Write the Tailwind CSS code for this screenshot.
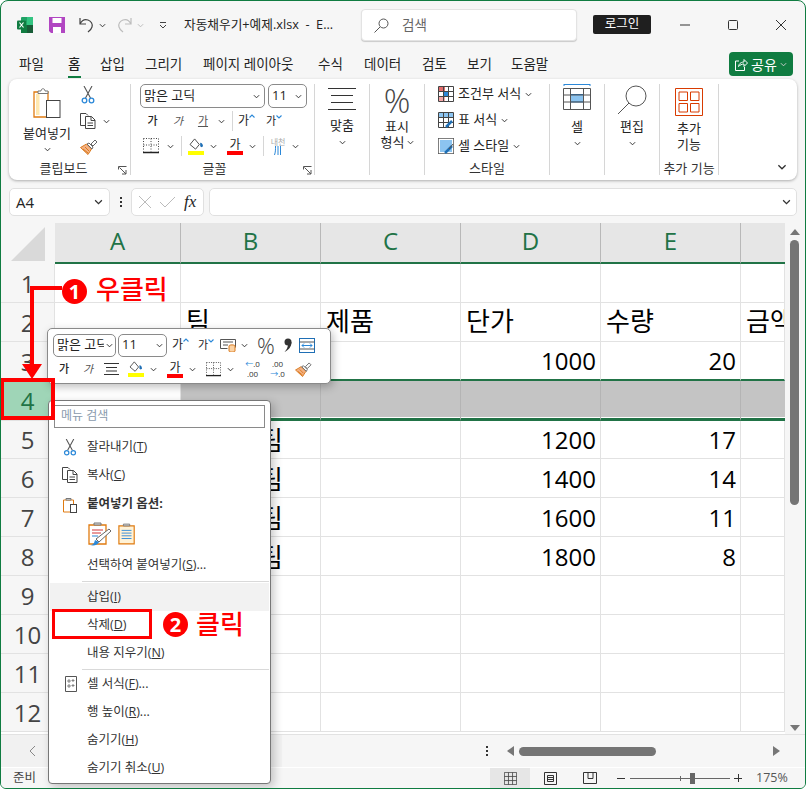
<!doctype html>
<html lang="ko">
<head>
<meta charset="utf-8">
<script src="https://cdn.jsdelivr.net/npm/@tailwindcss/browser@4"></script>
<title>자동채우기+예제.xlsx</title>
</head>
<body class="bg-white">
<svg width="0" height="0" class="absolute">
  <symbol id="chev" viewBox="0 0 8 5"><path d="M1 1l3 3 3-3" fill="none" stroke="#333" stroke-width="1.1"/></symbol>
  <symbol id="up" viewBox="0 0 6 4"><path d="M.5 3.500L3 1l2.500 2.500" fill="none" stroke="#2b88d8" stroke-width="1.100"/></symbol>
  <symbol id="down" viewBox="0 0 6 4"><path d="M.5.500L3 3 5.500.500" fill="none" stroke="#2b88d8" stroke-width="1.100"/></symbol>
  <symbol id="launch" viewBox="0 0 9 9"><path d="M.5 3.5v-3h8M1.500 1.500l6.500 6.500M8 4v4H4" fill="none" stroke="#555"/></symbol>
  <symbol id="scissors" viewBox="0 0 14 18"><path d="M3 0l6.500 12M11 0L4.500 12" fill="none" stroke="#555" stroke-width="1.100"/><circle cx="3.500" cy="14.500" r="2.300" fill="none" stroke="#2b88d8" stroke-width="1.300"/><circle cx="10.500" cy="14.500" r="2.300" fill="none" stroke="#2b88d8" stroke-width="1.300"/></symbol>
  <symbol id="copy" viewBox="0 0 17 16"><path d="M5 12.500H.5v-12H6l2 2M5.500 3.500h6l3.500 3.500v8.500H5.500zM11 3.500v4h4M7.500 10h5.500M7.500 12.500h5.500" fill="none" stroke="#444"/></symbol>
  <symbol id="brush" viewBox="0 0 18 16"><path d="M0.500 8.500l6-3.500 5 5-3.500 5.500z" fill="#f4b183" stroke="#d97a1e"/><path d="M3 10l5 4M5 8l4 4" stroke="#d97a1e"/><path d="M7 5l2-1 4 4-1 2zM11 5l4-4 2 2-4 4z" fill="#fff" stroke="#666"/></symbol>
  <symbol id="border" viewBox="0 0 16 16"><path d="M.5.500h15M.5.500v13M15.500.500v13M8 .5v13M.5 7h15" fill="none" stroke="#444" stroke-dasharray="1 1.500"/><path d="M0 14.500h16" stroke="#222" stroke-width="1.400"/></symbol>
  <symbol id="bucket" viewBox="0 0 16 14"><path d="M1 7l5-6 5 6-4 5z" fill="#fff" stroke="#444"/><path d="M12 5c2 0 3 2 3 4l-1.500 1L12 9z" fill="#1f6fb5"/></symbol>
  <symbol id="alignlines" viewBox="0 0 28 22"><path d="M0 .5h28M3 7.500h22M3 14.500h22M0 21.500h28" stroke="#333" stroke-width="1"/></symbol>
  <symbol id="stylegrid" viewBox="0 0 16 16"><path d="M.5.500h15v15H.5zM.5 5.500h15M.5 10.500h15M5.500.500v15M10.500.500v15" fill="none" stroke="#444"/></symbol>
</svg>

<div class="relative flex h-[789px] w-[806px] flex-col overflow-hidden rounded-t-[8px] rounded-b-[6px] border border-[#107c41] bg-[#f6f6f6] font-['Open_Sans','Noto_Sans_CJK_KR',sans-serif] text-[#242424]">

  <!-- Title bar -->
  <header class="flex h-[46px] items-center pt-[2px] text-[12px]">
    <svg class="ml-[16px] h-[16px] w-[16px]" viewBox="0 0 16 16"><rect x="4" width="12" height="16" rx="1" fill="#21a366"/><rect x="10" width="6" height="8" fill="#33c481"/><rect x="4" y="8" width="6" height="8" fill="#107c41"/><rect x="10" y="8" width="6" height="8" fill="#185c37"/><rect y="3.500" width="9" height="9" rx="1" fill="#107c41"/><path d="M2.500 5.500l4 5M6.500 5.500l-4 5" stroke="#fff" stroke-width="1.200"/></svg>
    <svg class="ml-[16px] h-[16px] w-[16px]" viewBox="0 0 16 16"><path d="M0 0h16v16H2l-2-2z" fill="#b146c2"/><rect x="3.500" y="1" width="9" height="5" fill="#fff"/><rect x="4" y="10" width="8" height="6" fill="#fff"/></svg>
    <svg class="ml-[14px] h-[16px] w-[15px]" viewBox="0 0 15 16"><path d="M1 1v6h6M1 7c2-4 5-5 8-4s5 4 4 7-3 4-4 5" fill="none" stroke="#444" stroke-width="1.200"/></svg>
    <svg class="ml-[5px] h-[5px] w-[7px]"><use href="#chev"/></svg>
    <svg class="ml-[11px] h-[16px] w-[15px]" viewBox="0 0 15 16"><path d="M14 1v6H8M14 7c-2-4-5-5-8-4S1 7 2 10s3 4 4 5" fill="none" stroke="#bdbdbd" stroke-width="1.200"/></svg>
    <svg class="ml-[5px] h-[5px] w-[7px] opacity-30"><use href="#chev"/></svg>
    <svg class="ml-[15px] h-[7px] w-[8px]" viewBox="0 0 8 7"><path d="M1 .5h6M1 3l3 3 3-3" fill="none" stroke="#444"/></svg>
    <span class="ml-[17px] w-[165px] whitespace-pre text-[12.7px]">자동채우기+예제.xlsx  -  E...</span>
    <div class="ml-[12px] flex h-[32px] w-[216px] items-center rounded-[4px] border border-[#e3e3e3] bg-white pl-[12px] shadow-[0_1px_1px_rgba(0,0,0,.18)]">
      <svg class="h-[15px] w-[15px]" viewBox="0 0 15 15"><circle cx="9.500" cy="5.500" r="4.500" fill="none" stroke="#555"/><path d="M6 9l-5.500 5.500" stroke="#555"/></svg>
      <span class="ml-[13px] text-[13.500px] text-[#666]">검색</span>
    </div>
    <div class="ml-[16px] mt-[-1px] flex h-[19px] w-[58px] items-center justify-center rounded-[2px] bg-[#1f1f1f] text-[12.500px] text-white">로그인</div>
    <svg class="ml-[29px] h-[10px] w-[10px]" viewBox="0 0 10 10"><path d="M0 5h10" stroke="#333"/></svg>
    <svg class="ml-[38px] h-[10px] w-[10px]" viewBox="0 0 10 10"><rect x=".5" y=".5" width="9" height="9" rx="1" fill="none" stroke="#333"/></svg>
    <svg class="ml-[38px] h-[10px] w-[10px]" viewBox="0 0 10 10"><path d="M0 0l10 10M10 0L0 10" stroke="#333"/></svg>
  </header>

  <!-- Tabs -->
  <nav class="flex h-[32px] items-center pl-[18px] pt-[2px] text-[13.500px]">
    <span class="w-[25px] whitespace-nowrap">파일</span>
    <span class="relative ml-[24px] w-[13px] font-medium">홈<span class="absolute -bottom-[4px] left-0 h-[2px] w-[13px] bg-[#107c41]"></span></span>
    <span class="ml-[19px] w-[25px] whitespace-nowrap">삽입</span>
    <span class="ml-[20px] w-[38px] whitespace-nowrap">그리기</span>
    <span class="ml-[20px] w-[95px] whitespace-nowrap">페이지 레이아웃</span>
    <span class="ml-[20px] w-[25px] whitespace-nowrap">수식</span>
    <span class="ml-[21px] w-[38px] whitespace-nowrap">데이터</span>
    <span class="ml-[20px] w-[25px] whitespace-nowrap">검토</span>
    <span class="ml-[20px] w-[25px] whitespace-nowrap">보기</span>
    <span class="ml-[19px] w-[38px] whitespace-nowrap">도움말</span>
    <div class="ml-[180px] flex h-[24px] w-[64px] items-center justify-center gap-[3px] rounded-[4px] bg-[#107c41] text-[14px] text-white">
      <svg class="h-[13px] w-[13px]" viewBox="0 0 13 13"><path d="M4 3H.5v9.500h9V9M3.500 8.500C4 5 7 4 9 4V1.500L12.500 5 9 8.500V6C7 6 5 7 3.500 8.500z" fill="none" stroke="#fff"/></svg>
      <span>공유</span>
      <svg class="h-[5px] w-[7px] invert"><use href="#chev"/></svg>
    </div>
  </nav>

  <!-- Ribbon -->
  <section class="mx-[8px] flex h-[101px] rounded-[8px] bg-white py-[5px] text-[13px] shadow-[0_1px_3px_rgba(0,0,0,.3)]">

    <div class="flex w-[122px] flex-col border-r border-[#d6d6d6]">
      <div class="flex h-[78px]">
        <div class="flex w-[76px] flex-col items-center pt-[4px]">
          <svg class="h-[30px] w-[28px]" viewBox="0 0 28 30"><path d="M1 4h14v25H1z" fill="#fff" stroke="#e07b10" stroke-width="1.300"/><path d="M3 6v21h3.500V6z" fill="#ffe8b0"/><path d="M5 5.500V3h3c0-3 4-3 4 0h3v2.500z" fill="#fff" stroke="#777"/><rect x="13.500" y="12.500" width="13.500" height="17" fill="#fff" stroke="#444"/></svg>
          <span class="mt-[6px] whitespace-nowrap">붙여넣기</span>
          <svg class="mt-[3px] h-[5px] w-[7px]"><use href="#chev"/></svg>
        </div>
        <div class="flex flex-col gap-[10px] pt-[3px]">
          <div class="flex h-[16px] w-[14px]"><svg class="-mt-[1px] ml-[-4px] h-[18px] w-[14px]"><use href="#scissors"/></svg></div>
          <div class="flex h-[16px] items-center"><svg class="ml-[-5px] h-[16px] w-[17px]"><use href="#copy"/></svg><svg class="ml-[6px] h-[5px] w-[7px]"><use href="#chev"/></svg></div>
          <div class="flex h-[16px]"><svg class="ml-[-5px] h-[16px] w-[18px]"><use href="#brush"/></svg></div>
        </div>
      </div>
      <div class="relative flex h-[13px] items-center justify-center pr-[12px] text-[#333]">클립보드<svg class="absolute right-[3px] top-[4px] h-[9px] w-[9px]"><use href="#launch"/></svg></div>
    </div>

    <div class="flex w-[184px] flex-col border-r border-[#d6d6d6]">
      <div class="h-[78px] pl-[9px]">
        <div class="flex h-[24px] gap-[3px]">
          <div class="flex w-[125px] items-center justify-between rounded-[5px] border border-[#8a8a8a] px-[3px] pr-[4px]"><span>맑은 고딕</span><svg class="h-[5px] w-[7px]"><use href="#chev"/></svg></div>
          <div class="flex w-[39px] items-center justify-between rounded-[5px] border border-[#8a8a8a] px-[3px] pr-[4px]"><span>11</span><svg class="h-[5px] w-[7px]"><use href="#chev"/></svg></div>
        </div>
        <div class="mt-[3px] flex h-[20px] items-center">
          <span class="w-[25px] text-center text-[11px] font-medium">가</span>
          <span class="w-[26px] text-center text-[11px] italic text-[#555]">가</span>
          <span class="w-[24px] text-center text-[11px] text-[#555] underline">가</span>
          <svg class="ml-[3px] h-[5px] w-[7px]"><use href="#chev"/></svg>
          <span class="ml-[7px] h-[20px] w-px bg-[#d6d6d6]"></span>
          <span class="ml-[5px] flex w-[20px] items-start text-[12px]">가<svg class="mt-[2px] h-[4px] w-[6px]"><use href="#up"/></svg></span>
          <span class="ml-[8px] flex w-[20px] items-start text-[11px]">가<svg class="mt-[2px] h-[4px] w-[6px]"><use href="#down"/></svg></span>
        </div>
        <div class="mt-[5px] flex h-[20px] items-center">
          <svg class="ml-[3px] h-[16px] w-[16px]"><use href="#border"/></svg>
          <svg class="ml-[8px] h-[5px] w-[7px]"><use href="#chev"/></svg>
          <span class="ml-[7px] h-[20px] w-px bg-[#d6d6d6]"></span>
          <div class="ml-[6px] flex w-[16px] flex-col items-center"><svg class="h-[13px] w-[15px]"><use href="#bucket"/></svg><span class="h-[4px] w-[16px] bg-[#ffff00]"></span></div>
          <svg class="ml-[6px] h-[5px] w-[7px]"><use href="#chev"/></svg>
          <div class="ml-[10px] flex w-[16px] flex-col items-center text-[12px] leading-[13px]">가<span class="h-[4px] w-[16px] bg-[#ff0000]"></span></div>
          <svg class="ml-[6px] h-[5px] w-[7px]"><use href="#chev"/></svg>
          <span class="ml-[7px] h-[20px] w-px bg-[#d6d6d6]"></span>
          <div class="ml-[6px] flex w-[16px] flex-col items-center text-[8px] leading-[9px] text-[#aaa]"><span class="whitespace-nowrap">내천</span><svg class="h-[9px] w-[8px]" viewBox="0 0 8 9"><path d="M1.500 0c0 4 0 6-1 9M4 0v9M6.500 0v9" fill="none" stroke="#2b88d8"/></svg></div>
          <svg class="ml-[6px] h-[5px] w-[7px]"><use href="#chev"/></svg>
        </div>
      </div>
      <div class="relative flex h-[13px] items-center justify-center pr-[16px] text-[#333]">글꼴<svg class="absolute right-[2px] top-[4px] h-[9px] w-[9px]"><use href="#launch"/></svg></div>
    </div>

    <div class="flex w-[55px] flex-col items-center border-r border-[#d6d6d6] pt-[4px]">
      <svg class="h-[22px] w-[28px]"><use href="#alignlines"/></svg>
      <span class="mt-[6px] whitespace-nowrap">맞춤</span>
      <svg class="mt-[4px] h-[5px] w-[7px]"><use href="#chev"/></svg>
    </div>

    <div class="flex w-[55px] flex-col items-center border-r border-[#d6d6d6]">
      <span class="h-[33px] text-[33px] font-light leading-[33px] text-[#444]">%</span>
      <span class="mt-px whitespace-nowrap leading-[16px]">표시</span>
      <div class="flex items-center gap-[3px] pl-[1px] leading-[16px]"><span class="whitespace-nowrap">형식</span><svg class="h-[5px] w-[7px]"><use href="#chev"/></svg></div>
    </div>

    <div class="flex w-[125px] flex-col border-r border-[#d6d6d6]">
      <div class="flex h-[78px] flex-col gap-[10px] pl-[13px] pt-[2px]">
        <div class="flex h-[16px] items-center gap-[4px] whitespace-nowrap"><svg class="h-[16px] w-[16px]" viewBox="0 0 16 16"><rect x="1" y="1" width="6" height="4" fill="#e46c6c"/><rect x="5" y="6" width="6" height="4" fill="#2b88d8"/><rect x="1" y="11" width="6" height="4" fill="#f4a6a6"/><use href="#stylegrid"/></svg><span>조건부 서식</span><svg class="h-[5px] w-[7px]"><use href="#chev"/></svg></div>
        <div class="flex h-[16px] items-center gap-[4px] whitespace-nowrap"><svg class="h-[16px] w-[16px]" viewBox="0 0 16 16"><rect x="1" y="1" width="14" height="4" fill="#8cc4f0"/><use href="#stylegrid"/><path d="M8 15l6-6" stroke="#1f6fb5" stroke-width="2.500"/></svg><span>표 서식</span><svg class="h-[5px] w-[7px]"><use href="#chev"/></svg></div>
        <div class="flex h-[16px] items-center gap-[4px] whitespace-nowrap"><svg class="h-[16px] w-[16px]" viewBox="0 0 16 16"><rect width="16" height="16" fill="none" stroke="#555" stroke-width="1.500"/><rect x="2" y="2" width="12" height="12" fill="#8cc4f0"/><path d="M7 15l7-7" stroke="#1f6fb5" stroke-width="2.500"/><path d="M11 11l4-5" stroke="#555"/></svg><span>셀 스타일</span><svg class="h-[5px] w-[7px]"><use href="#chev"/></svg></div>
      </div>
      <div class="flex h-[13px] items-center justify-center text-[#333]">스타일</div>
    </div>

    <div class="flex w-[55px] flex-col items-center border-r border-[#d6d6d6]">
      <svg class="h-[28px] w-[28px]" viewBox="0 0 28 28"><path d="M1 .5h26M1 0v2M27 0v2" stroke="#2b88d8"/><rect x="7.500" y="10.500" width="13" height="7.500" fill="#8cc4f0" stroke="#1f6fb5"/><path d="M.5 4.500h27v21H.5zM.5 11h27M.5 18h27M7.500 4.500v21M20.500 4.500v21" fill="none" stroke="#555"/></svg>
      <span class="mt-[5px]">셀</span>
      <svg class="mt-[4px] h-[5px] w-[7px]"><use href="#chev"/></svg>
    </div>

    <div class="flex w-[55px] flex-col items-center border-r border-[#d6d6d6]">
      <svg class="mt-[1px] h-[30px] w-[30px]" viewBox="0 0 30 30"><circle cx="19" cy="11" r="10" fill="none" stroke="#555"/><path d="M12 18L1 29" stroke="#555"/></svg>
      <span class="mt-[2px] whitespace-nowrap">편집</span>
      <svg class="mt-[4px] h-[5px] w-[7px]"><use href="#chev"/></svg>
    </div>

    <div class="flex w-[59px] flex-col items-center border-r border-[#d6d6d6]">
      <svg class="mt-[4px] h-[28px] w-[28px]" viewBox="0 0 28 28"><path d="M.5.500h27v27H.5z" fill="none" stroke="#d83b01"/><path d="M4 4h8.500v8.500H4zM15.500 4H24v8.500h-8.500zM4 15.500h8.500V24H4zM15.500 15.500H24V24h-8.500z" fill="none" stroke="#d83b01"/></svg>
      <span class="mt-[4px] whitespace-nowrap leading-[16px]">추가</span>
      <span class="whitespace-nowrap leading-[16px]">기능</span>
      <span class="mt-[10px] h-[13px] whitespace-nowrap leading-[13px] text-[#333]">추가 기능</span>
    </div>

    <div class="flex flex-1 items-end justify-end pb-[5px] pr-[10px]"><svg class="h-[6px] w-[10px]"><use href="#chev"/></svg></div>
  </section>

  <!-- Formula bar -->
  <div class="mx-[8px] mt-[8px] flex h-[28px] text-[15px]">
    <div class="flex w-[101px] items-center justify-between rounded-[5px] border border-[#e0e0e0] bg-white pl-[6px] pr-[6px]"><span>A4</span><svg class="h-[6px] w-[9px]"><use href="#chev"/></svg></div>
    <div class="flex w-[21px] flex-col items-center justify-center gap-[2px]"><i class="h-[2px] w-[2px] bg-[#333]"></i><i class="h-[2px] w-[2px] bg-[#333]"></i><i class="h-[2px] w-[2px] bg-[#333]"></i></div>
    <div class="flex w-[73px] items-center justify-around rounded-[5px] border border-[#e0e0e0] bg-white px-[2px]">
      <svg class="h-[12px] w-[12px]" viewBox="0 0 12 12"><path d="M0 0l12 12M12 0L0 12" stroke="#bbb"/></svg>
      <svg class="h-[12px] w-[15px]" viewBox="0 0 15 12"><path d="M0 6l5 5L15 1" fill="none" stroke="#bbb"/></svg>
      <span class="font-['Liberation_Serif',serif] text-[17px] italic">fx</span>
    </div>
    <div class="ml-[5px] flex flex-1 items-center justify-end rounded-[5px] border border-[#e0e0e0] bg-white pr-[5px]"><svg class="h-[6px] w-[9px]"><use href="#chev"/></svg></div>
  </div>

  <!-- Sheet -->
  <div class="mt-[7px] flex h-[511px]">
    <div class="h-[511px] w-[784px] overflow-hidden">
      <div class="grid grid-cols-[54px_126px_140px_140px_140px_140px_44px] grid-rows-[41px_39px_39px_39px_40px_38px_repeat(7,39px)] bg-white text-[24px] leading-none text-black [&>div]:flex [&>div]:items-center [&>div]:overflow-hidden [&>div]:whitespace-nowrap [&>div]:border-r [&>div]:border-b [&>div]:border-[#e2e2e2] [&>div]:pt-px">
        <!-- headers -->
        <div class="justify-center !border-r-0 !border-b-0 bg-[#f6f6f6]"><svg class="ml-[-1px] h-[34px] w-[34px]" viewBox="0 0 34 34"><path d="M34 0v34H0z" fill="#d9d9d9"/></svg></div>
        <div class="justify-center !border-b-2 !border-r-[#b8b8b8] !border-b-[#217346] bg-[#e6e6e6] !pt-0 pb-[4px] text-[#217346]">A</div>
        <div class="justify-center !border-b-2 !border-r-[#b8b8b8] !border-b-[#217346] bg-[#e6e6e6] !pt-0 pb-[4px] text-[#217346]">B</div>
        <div class="justify-center !border-b-2 !border-r-[#b8b8b8] !border-b-[#217346] bg-[#e6e6e6] !pt-0 pb-[4px] text-[#217346]">C</div>
        <div class="justify-center !border-b-2 !border-r-[#b8b8b8] !border-b-[#217346] bg-[#e6e6e6] !pt-0 pb-[4px] text-[#217346]">D</div>
        <div class="justify-center !border-b-2 !border-r-[#b8b8b8] !border-b-[#217346] bg-[#e6e6e6] !pt-0 pb-[4px] text-[#217346]">E</div>
        <div class="!border-b-2 !border-r-0 !border-b-[#217346] bg-[#e6e6e6]"></div>
        <!-- 1 -->
        <div class="justify-center bg-[#f6f6f6] text-[#444]">1</div><div></div><div></div><div></div><div></div><div></div><div></div>
        <!-- 2 -->
        <div class="justify-center bg-[#f6f6f6] text-[#444]">2</div><div></div>
        <div class="!pt-0 pb-[2px] pl-[5px] text-[26px]">팀</div><div class="!pt-0 pb-[2px] pl-[5px] text-[26px]">제품</div><div class="!pt-0 pb-[2px] pl-[5px] text-[26px]">단가</div><div class="!pt-0 pb-[2px] pl-[5px] text-[26px]">수량</div><div class="!pt-0 pb-[2px] pl-[5px] text-[26px]">금액</div>
        <!-- 3 -->
        <div class="justify-center bg-[#f6f6f6] text-[#444]">3</div><div class="!border-b-2 !border-b-[#217346]"></div><div class="!border-b-2 !border-b-[#217346]"></div><div class="!border-b-2 !border-b-[#217346]"></div><div class="justify-end !border-b-2 !border-b-[#217346] pr-[4px]">1000</div><div class="justify-end !border-b-2 !border-b-[#217346] pr-[4px]">20</div><div class="!border-b-2 !border-b-[#217346]"></div>
        <!-- 4 -->
        <div class="justify-center bg-[#9fd5b7] text-[#217346]">4</div>
        <div class="!border-b-[3px] !border-b-[#217346] shadow-[inset_0_-1px_0_#fff]"></div>
        <div class="!border-b-[3px] !border-r-[#b4b4b4] !border-b-[#217346] bg-[#c4c4c4] shadow-[inset_0_-1px_0_#fff]"></div>
        <div class="!border-b-[3px] !border-r-[#b4b4b4] !border-b-[#217346] bg-[#c4c4c4] shadow-[inset_0_-1px_0_#fff]"></div>
        <div class="!border-b-[3px] !border-r-[#b4b4b4] !border-b-[#217346] bg-[#c4c4c4] shadow-[inset_0_-1px_0_#fff]"></div>
        <div class="!border-b-[3px] !border-r-[#b4b4b4] !border-b-[#217346] bg-[#c4c4c4] shadow-[inset_0_-1px_0_#fff]"></div>
        <div class="!border-b-[3px] !border-r-0 !border-b-[#217346] bg-[#c4c4c4] shadow-[inset_0_-1px_0_#fff]"></div>
        <!-- 5 -->
        <div class="justify-center bg-[#f6f6f6] text-[#444]">5</div><div></div><div class="pl-[78px] text-[26px]">팀</div><div></div><div class="justify-end pr-[4px]">1200</div><div class="justify-end pr-[4px]">17</div><div></div>
        <!-- 6 -->
        <div class="justify-center bg-[#f6f6f6] text-[#444]">6</div><div></div><div class="pl-[78px] text-[26px]">팀</div><div></div><div class="justify-end pr-[4px]">1400</div><div class="justify-end pr-[4px]">14</div><div></div>
        <!-- 7 -->
        <div class="justify-center bg-[#f6f6f6] text-[#444]">7</div><div></div><div class="pl-[78px] text-[26px]">팀</div><div></div><div class="justify-end pr-[4px]">1600</div><div class="justify-end pr-[4px]">11</div><div></div>
        <!-- 8 -->
        <div class="justify-center bg-[#f6f6f6] text-[#444]">8</div><div></div><div class="pl-[78px] text-[26px]">팀</div><div></div><div class="justify-end pr-[4px]">1800</div><div class="justify-end pr-[4px]">8</div><div></div>
        <!-- 9-12 -->
        <div class="justify-center bg-[#f6f6f6] text-[#444]">9</div><div></div><div></div><div></div><div></div><div></div><div></div>
        <div class="justify-center bg-[#f6f6f6] text-[#444]">10</div><div></div><div></div><div></div><div></div><div></div><div></div>
        <div class="justify-center bg-[#f6f6f6] text-[#444]">11</div><div></div><div></div><div></div><div></div><div></div><div></div>
        <div class="justify-center bg-[#f6f6f6] text-[#444]">12</div><div></div><div></div><div></div><div></div><div></div><div></div>
      </div>
      <div class="h-[2px] bg-white"></div>
    </div>
    <!-- vertical scrollbar -->
    <div class="flex w-[20px] flex-col items-center">
      <svg class="mt-[6px] h-[6px] w-[10px]" viewBox="0 0 10 6"><path d="M5 0l5 6H0z" fill="#777"/></svg>
      <div class="ml-[-2px] mt-[5px] h-[265px] w-[9px] rounded-full bg-[#757575]"></div>
      <div class="flex-1"></div>
      <svg class="mb-[3px] h-[6px] w-[10px]" viewBox="0 0 10 6"><path d="M5 6l5-6H0z" fill="#777"/></svg>
    </div>
  </div>

  <!-- Horizontal scroll strip -->
  <div class="flex h-[33px] items-center border-t border-[#e2e2e2] bg-[#f6f6f6]">
    <div class="flex h-full w-[281px] items-center bg-[#f1f1f1]"><svg class="ml-[28px] h-[12px] w-[7px]" viewBox="0 0 7 12"><path d="M6 1L1 6l5 5" fill="none" stroke="#888"/></svg></div>
    <div class="ml-[204px] flex flex-col gap-[2px]"><i class="h-[2px] w-[2px] bg-[#333]"></i><i class="h-[2px] w-[2px] bg-[#333]"></i><i class="h-[2px] w-[2px] bg-[#333]"></i></div>
    <svg class="ml-[19px] h-[10px] w-[7px]" viewBox="0 0 7 10"><path d="M7 0v10L0 5z" fill="#777"/></svg>
    <div class="ml-[5px] h-[9px] w-[137px] rounded-full bg-[#757575]"></div>
    <svg class="ml-[117px] h-[10px] w-[7px]" viewBox="0 0 7 10"><path d="M0 0v10l7-5z" fill="#777"/></svg>
  </div>

  <!-- Status bar -->
  <footer class="flex h-[21px] items-center border-t border-white bg-[#f6f6f6] text-[12.500px] text-[#444]">
    <span class="ml-[12px] w-[24px] whitespace-nowrap">준비</span>
    <div class="ml-[453px] flex h-[20px] w-[40px] items-center justify-center bg-[#e6e6e6]"><svg class="h-[13px] w-[13px]"><use href="#stylegrid"/></svg></div>
    <div class="flex h-[20px] w-[40px] items-center justify-center"><svg class="h-[13px] w-[13px]" viewBox="0 0 13 13"><path d="M.5.500h12v12H.5zM3.500 3.500h6v6h-6zM3.500 5.500h6M3.500 7.500h6" fill="none" stroke="#333"/></svg></div>
    <div class="flex h-[20px] w-[40px] items-center justify-center"><svg class="h-[12px] w-[14px]" viewBox="0 0 14 12"><path d="M.5.500h13v11H.5zM5 .5v6h5v-6" fill="none" stroke="#333"/></svg></div>
    <span class="ml-[7px] h-px w-[8px] bg-[#333]"></span>
    <div class="relative ml-[5px] h-px w-[100px] bg-[#666]"><i class="absolute left-[50px] top-[-2px] h-[5px] w-px bg-[#666]"></i><i class="absolute left-[60px] top-[-5px] h-[11px] w-[5px] bg-[#666]"></i></div>
    <span class="relative ml-[4px] h-px w-[8px] bg-[#333]"><i class="absolute left-[3.500px] top-[-3.500px] h-[8px] w-px bg-[#333]"></i></span>
    <span class="ml-[14px] text-[12.500px] text-[#555]">175%</span>
  </footer>

  <!-- Mini toolbar -->
  <div class="absolute left-[46px] top-[327px] z-20 w-[284px] rounded-[5px] border border-[#8a8a8a] bg-white pb-[3px] pl-[5px] pt-[4px] text-[13px] shadow-[2px_3px_8px_rgba(0,0,0,.25)]">
    <div class="flex h-[24px] items-center">
      <div class="flex h-[23px] w-[63px] items-center justify-between overflow-hidden rounded-[5px] border border-[#8a8a8a] pl-[3px] pr-[2px]"><span class="w-[47px] overflow-hidden whitespace-nowrap">맑은 고딕</span><svg class="h-[5px] w-[7px] shrink-0"><use href="#chev"/></svg></div>
      <div class="ml-[2px] flex h-[23px] w-[49px] items-center justify-between rounded-[5px] border border-[#8a8a8a] pl-[3px] pr-[3px]"><span>11</span><svg class="h-[5px] w-[7px]"><use href="#chev"/></svg></div>
      <span class="ml-[5px] flex w-[20px] items-start text-[12px]">가<svg class="mt-[2px] h-[4px] w-[6px]"><use href="#up"/></svg></span>
      <span class="ml-[6px] flex w-[20px] items-start text-[11px]">가<svg class="mt-[2px] h-[4px] w-[6px]"><use href="#down"/></svg></span>
      <svg class="ml-[2px] h-[14px] w-[16px]" viewBox="0 0 16 14"><path d="M.5 1.500h15v8M.5 1.500v9h7M3 4h10M3 7h5" fill="none" stroke="#555"/><path d="M9 8c0-1.500 6-1.500 6 0v5c0 1.500-6 1.500-6 0z" fill="#fbd3a5" stroke="#d97a1e"/></svg>
      <svg class="ml-[5px] h-[5px] w-[7px]"><use href="#chev"/></svg>
      <span class="ml-[9px] w-[18px] text-[22px] font-light leading-none text-[#444]">%</span>
      <svg class="ml-[8px] h-[15px] w-[9px]" viewBox="0 0 9 15"><circle cx="5" cy="4" r="3.500" fill="#333"/><path d="M8.500 4c0 5-3 8-7 10 2-2 3.500-5 3.500-8z" fill="#333"/></svg>
      <svg class="ml-[7px] h-[15px] w-[16px]" viewBox="0 0 16 15"><rect x=".5" y=".5" width="15" height="14" fill="#fff" stroke="#1f6fb5"/><path d="M.5 4h15M.5 11h15" stroke="#555"/><path d="M3 7.500h10M5 5.500l-2 2 2 2M11 5.500l2 2-2 2" fill="none" stroke="#2b88d8"/></svg>
    </div>
    <div class="mt-[1px] flex h-[22px] items-center">
      <span class="ml-[5px] w-[12px] text-center text-[11px] font-medium">가</span>
      <span class="ml-[12px] w-[12px] text-center text-[11px] italic text-[#555]">가</span>
      <svg class="ml-[10px] h-[12px] w-[15px]" viewBox="0 0 15 12"><path d="M0 .5h15M2 4.500h11M2 8h11M0 11.500h15" stroke="#333"/></svg>
      <div class="ml-[9px] flex w-[16px] flex-col items-center"><svg class="h-[12px] w-[14px]"><use href="#bucket"/></svg><span class="h-[4px] w-[16px] bg-[#ffff00]"></span></div>
      <svg class="ml-[6px] h-[5px] w-[7px]"><use href="#chev"/></svg>
      <div class="ml-[10px] flex w-[16px] flex-col items-center text-[12px] leading-[13px]">가<span class="h-[4px] w-[16px] bg-[#ff0000]"></span></div>
      <svg class="ml-[6px] h-[5px] w-[7px]"><use href="#chev"/></svg>
      <svg class="ml-[10px] h-[15px] w-[15px]"><use href="#border"/></svg>
      <svg class="ml-[6px] h-[5px] w-[7px]"><use href="#chev"/></svg>
      <div class="ml-[10px] w-[17px] text-center text-[8px] leading-[10px] text-[#333]"><span class="whitespace-nowrap"><span class="text-[#2b88d8]">←</span>.0</span><br>.00</div>
      <div class="ml-[8px] w-[17px] text-center text-[8px] leading-[10px] text-[#333]">.00<br><span class="whitespace-nowrap"><span class="text-[#2b88d8]">→</span>.0</span></div>
      <svg class="ml-[9px] h-[15px] w-[17px]"><use href="#brush"/></svg>
    </div>
  </div>

  <!-- Context menu -->
  <div class="absolute left-[47px] top-[399px] z-20 h-[384px] w-[223px] rounded-[4px] border border-[#777] bg-white p-px text-[12.500px] text-[#333] shadow-[3px_3px_10px_rgba(0,0,0,.22)]">
    <div class="mx-[4px] mt-[3px] flex h-[23px] items-center border border-[#8a8a8a] pb-[2px] pl-[6px] text-[12px] text-[#8a9bad]">메뉴 검색</div>
    <div class="mt-[5px] flex h-[28px] items-center"><svg class="ml-[13px] h-[17px] w-[14px]"><use href="#scissors"/></svg><span class="ml-[10px]">잘라내기(<u>T</u>)</span></div>
    <div class="flex h-[28px] items-center"><svg class="ml-[12px] h-[16px] w-[17px]"><use href="#copy"/></svg><span class="ml-[8px]">복사(<u>C</u>)</span></div>
    <div class="flex h-[28px] items-center pt-[3px]"><svg class="ml-[13px] h-[16px] w-[15px]" viewBox="0 0 15 16"><path d="M.5 3h10v12H.5z" fill="#fff" stroke="#e07b10"/><path d="M3 3V1.500h5V3z" fill="#fff" stroke="#777"/><rect x="7.500" y="7.500" width="6" height="8" fill="#fff" stroke="#444"/></svg><span class="ml-[9px] font-bold">붙여넣기 옵션:</span></div>
    <div class="flex h-[30px] items-center pl-[38px] pt-[4px]">
      <svg class="h-[24px] w-[24px]" viewBox="0 0 24 24"><path d="M1 3h17v19H1z" fill="#fff" stroke="#e07b10" stroke-width="1.300"/><path d="M6 3V1h7v2z" fill="#ddd" stroke="#777"/><path d="M4 8h11M4 11h9" stroke="#d13438"/><path d="M4 14h6" stroke="#2b88d8"/><path d="M8 17l13-10 2 2-12 11z" fill="#fff" stroke="#666"/><path d="M2 23c3 0 4-1 5-5l4 2c-1 3-5 4-9 3z" fill="#2b88d8"/></svg>
      <svg class="ml-[6px] h-[24px] w-[18px]" viewBox="0 0 20 24"><path d="M1 3h17v20H1z" fill="#fff2d6" stroke="#e07b10" stroke-width="1.300"/><path d="M6 3V1h7v2z" fill="#ddd" stroke="#777"/><path d="M4 8h11M4 11h11M4 14h11M4 17h11" stroke="#2b88d8"/></svg>
    </div>
    <div class="flex h-[34px] items-center pl-[37px] pt-[2px]"><span>선택하여 붙여넣기(<u>S</u>)...</span></div>
    <div class="ml-[32px] h-px bg-[#d9d9d9]"></div>
    <div class="mt-px flex h-[28px] items-center bg-[#f2f2f2] pl-[37px]"><span>삽입(<u>I</u>)</span></div>
    <div class="flex h-[28px] items-center pl-[37px]"><span>삭제(<u>D</u>)</span></div>
    <div class="flex h-[28px] items-center pl-[37px]"><span>내용 지우기(<u>N</u>)</span></div>
    <div class="ml-[32px] mt-[2px] h-px bg-[#d9d9d9]"></div>
    <div class="flex h-[28px] items-center"><svg class="ml-[15px] h-[16px] w-[12px]" viewBox="0 0 12 16"><path d="M.5.500h11v15H.5z" fill="none" stroke="#555"/><path d="M3 4h2v2H3zM7 4h2v1H7zM3 9h2v2H3zM7 9h2v1H7z" fill="none" stroke="#555" stroke-width=".7"/></svg><span class="ml-[10px]">셀 서식(<u>F</u>)...</span></div>
    <div class="flex h-[28px] items-center pl-[37px]"><span>행 높이(<u>R</u>)...</span></div>
    <div class="flex h-[28px] items-center pl-[37px]"><span>숨기기(<u>H</u>)</span></div>
    <div class="flex h-[28px] items-center pl-[37px]"><span>숨기기 취소(<u>U</u>)</span></div>
  </div>

  <!-- Annotations -->
  <div class="absolute left-[-1px] top-[377px] z-30 h-[42px] w-[55px] border-[4px] border-[#ff0000]"></div>
  <svg class="absolute left-[21px] top-[285px] z-30 h-[95px] w-[40px]" viewBox="0 0 40 95"><path d="M40 2H10v78" fill="none" stroke="#ff0000" stroke-width="4"/><path d="M0 78h20L10 93z" fill="#ff0000"/></svg>
  <div class="absolute left-[61px] top-[278px] z-30 flex h-[25px] w-[25px] items-center justify-center rounded-full bg-[#ff0000] text-[20px] font-bold text-white">1</div>
  <div class="absolute left-[95px] top-[270px] z-30 text-[26px] font-medium leading-[36px] text-[#ff0000]">우클릭</div>
  <div class="absolute left-[51px] top-[608px] z-30 h-[30px] w-[100px] border-[3px] border-[#ff0000]"></div>
  <div class="absolute left-[162px] top-[611px] z-30 flex h-[25px] w-[25px] items-center justify-center rounded-full bg-[#ff0000] text-[20px] font-bold text-white">2</div>
  <div class="absolute left-[195px] top-[605px] z-30 text-[26px] font-medium leading-[36px] text-[#ff0000]">클릭</div>
</div>
</body>
</html>
